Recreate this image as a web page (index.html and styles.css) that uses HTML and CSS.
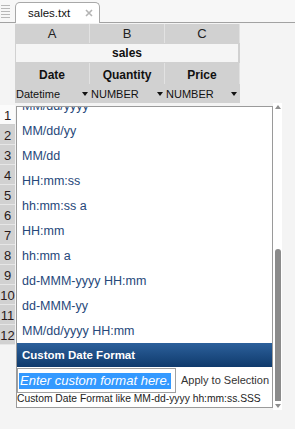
FILE: index.html
```
<!DOCTYPE html>
<html>
<head>
<meta charset="utf-8">
<link rel="stylesheet" href="styles.css">
</head>
<body>
<div class="tabbar">
  <div class="grip"></div>
  <div class="tab">
    <span class="tab-title">sales.txt</span>
    <svg class="tab-close" width="8" height="8" viewBox="0 0 8 8"><path d="M1 1L7 7M7 1L1 7" stroke="#b4b4b4" stroke-width="1.6" fill="none"/></svg>
  </div>
</div>

<div class="sheet-head">
  <div class="gutter"></div>
  <div class="cell letter">A</div>
  <div class="cell letter">B</div>
  <div class="cell letter">C</div>

  <div class="gutter"></div>
  <div class="title-row"><div class="title-inner">sales</div></div>

  <div class="gutter"></div>
  <div class="cell name">Date</div>
  <div class="cell name">Quantity</div>
  <div class="cell name">Price</div>

  <div class="gutter"></div>
  <div class="cell type"><span>Datetime</span><i class="tri"></i></div>
  <div class="cell type"><span>NUMBER</span><i class="tri"></i></div>
  <div class="cell type last"><span>NUMBER</span><i class="tri"></i></div>
</div>

<div class="sheet-body">
  <div class="rownums">
    <div class="rn sel">1</div>
    <div class="rn">2</div>
    <div class="rn">3</div>
    <div class="rn">4</div>
    <div class="rn">5</div>
    <div class="rn">6</div>
    <div class="rn">7</div>
    <div class="rn">8</div>
    <div class="rn">9</div>
    <div class="rn">10</div>
    <div class="rn">11</div>
    <div class="rn">12</div>
  </div>

  <div class="popup">
    <div class="list">
      <div class="list-inner">
        <div class="item">MM/dd/yyyy</div>
        <div class="item">MM/dd/yy</div>
        <div class="item">MM/dd</div>
        <div class="item">HH:mm:ss</div>
        <div class="item">hh:mm:ss a</div>
        <div class="item">HH:mm</div>
        <div class="item">hh:mm a</div>
        <div class="item">dd-MMM-yyyy HH:mm</div>
        <div class="item">dd-MMM-yy</div>
        <div class="item">MM/dd/yyyy HH:mm</div>
      </div>
    </div>
    <div class="custom-head">Custom Date Format</div>
    <div class="input-row">
      <div class="input"><span class="selected">Enter custom format here.</span></div>
      <span class="apply">Apply to Selection</span>
    </div>
    <div class="hint">Custom Date Format like MM-dd-yyyy hh:mm:ss.SSS</div>
  </div>

  <div class="scrollbar">
    <div class="arrow up"></div>
    <div class="thumb"></div>
    <div class="arrow down"></div>
  </div>
</div>
</body>
</html>
```
FILE: styles.css
```
html, body {
  margin: 0;
  padding: 0;
}
body {
  width: 295px;
  height: 429px;
  overflow: hidden;
  background: #f4f4f4;
  font-family: "Liberation Sans", Arial, sans-serif;
  color: #222;
}

/* tab bar */
.tabbar {
  height: 22px;
  border-bottom: 1px solid #a2a2a2;
  background: #f7f7f7;
  display: flex;
  align-items: flex-end;
}
.grip {
  align-self: flex-start;
  width: 9px;
  height: 15px;
  margin: 5px 5px 0 1px;
  background: repeating-linear-gradient(to bottom, #b8b8b8 0, #b8b8b8 1px, transparent 1px, transparent 3px);
}
.tab {
  box-sizing: border-box;
  width: 85px;
  height: 21px;
  margin-bottom: -1px;
  border: 1px solid #a8a8a8;
  border-bottom: none;
  border-radius: 5px 5px 0 0;
  background: #fff;
  display: flex;
  align-items: center;
  padding-left: 12px;
}
.tab-title {
  font-size: 11.5px;
  color: #111;
}
.tab-close {
  margin-left: 15px;
}

/* sheet header */
.sheet-head {
  margin-top: 1px;
  display: grid;
  grid-template-columns: 15px 75px 75px 75px;
  grid-template-rows: 19px 20px 21px 19px;
}
.gutter {
  background: #f4f4f4;
}
.cell {
  background: #d1d1d1;
  box-sizing: border-box;
  display: flex;
  align-items: center;
  justify-content: center;
}
.letter {
  border-right: 1px solid #e2e2e2;
  font-size: 13px;
  color: #222;
}
.title-row {
  grid-column: 2 / 5;
  background: #d1d1d1;
  padding: 1px 2px 1px 1px;
  box-sizing: border-box;
  display: flex;
}
.title-inner {
  flex: 1;
  background: #f5f5f5;
  display: flex;
  align-items: center;
  justify-content: center;
  font-weight: bold;
  font-size: 12px;
  color: #111;
}
.name {
  border-right: 1px solid #e2e2e2;
  font-weight: bold;
  font-size: 12px;
  color: #111;
  padding-top: 2px;
}
.type {
  justify-content: space-between;
  padding: 1px 2px 0 1px;
  font-size: 11px;
  color: #111;
}
.type.last {
  padding-right: 3px;
}
.tri {
  width: 0;
  height: 0;
  border-left: 3px solid transparent;
  border-right: 3px solid transparent;
  border-top: 4px solid #111;
}

/* body */
.sheet-body {
  display: flex;
  align-items: flex-start;
}
.rownums {
  width: 15px;
  margin-top: 2px;
}
.rn {
  box-sizing: border-box;
  height: 20px;
  background: #d1d1d1;
  border-bottom: 1px solid #e6e6e6;
  font-size: 13px;
  color: #2a1a1a;
  display: flex;
  align-items: center;
  justify-content: center;
  padding-top: 2px;
}
.rn.sel {
  background: #fbfbfb;
  border-bottom: 1px solid #cfcfcf;
}

.popup {
  box-sizing: border-box;
  width: 257px;
  margin: 3px 0 0 1px;
  border: 1px solid #9a9a9a;
  background: #fff;
}
.list {
  height: 236px;
  overflow: hidden;
}
.list-inner {
  margin-top: -13px;
}
.item {
  height: 25px;
  line-height: 25px;
  padding-left: 5px;
  font-size: 12.5px;
  color: #26487a;
  white-space: nowrap;
}
.custom-head {
  height: 24px;
  line-height: 24px;
  padding-left: 5px;
  background: linear-gradient(to bottom, #2c609b, #0f3a6c);
  color: #fff;
  font-weight: bold;
  font-size: 11.5px;
}
.input-row {
  height: 26px;
  display: flex;
  align-items: center;
}
.input {
  box-sizing: border-box;
  width: 159px;
  height: 25px;
  margin-top: 1px;
  border: 1px solid #a0a0a0;
  display: flex;
  align-items: center;
  padding-left: 1px;
}
.selected {
  background: #3399ff;
  color: #fff;
  font-style: italic;
  font-size: 13px;
  line-height: 16px;
  padding: 0 1px;
  white-space: nowrap;
}
.apply {
  margin-left: 5px;
  font-size: 11px;
  color: #333;
  white-space: nowrap;
}
.hint {
  height: 14px;
  line-height: 12px;
  font-size: 10.3px;
  color: #222;
  white-space: nowrap;
}

/* scrollbar */
.scrollbar {
  width: 9px;
  height: 307px;
  background: #fff;
  display: flex;
  flex-direction: column;
  align-items: center;
}
.arrow {
  width: 0;
  height: 0;
  border-left: 3.5px solid transparent;
  border-right: 3.5px solid transparent;
}
.arrow.up {
  margin-top: 2px;
  border-bottom: 4px solid #8e8e8e;
}
.thumb {
  width: 6px;
  height: 152px;
  margin-top: 140px;
  background: #8b8b8b;
  border-radius: 3px 3px 0 0;
}
.arrow.down {
  margin-top: 3px;
  border-top: 4px solid #8e8e8e;
}
```
